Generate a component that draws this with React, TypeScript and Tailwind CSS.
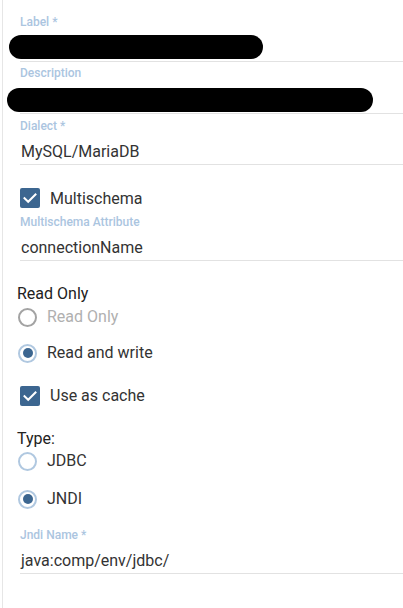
import React from "react";

const labelCls = "block h-[13px] text-[12px] leading-[13px] font-medium text-[#abc5df]";

function Check() {
  return (
    <div className="w-[20px] h-[20px] rounded-[2px] bg-[#3c6690] flex items-center justify-center shrink-0">
      <svg width="20" height="20" viewBox="0 0 20 20">
        <polyline points="4.5,10.2 8.2,13.8 15.5,6.5" fill="none" stroke="#ffffff" strokeWidth="2" strokeLinecap="square" />
      </svg>
    </div>
  );
}

function Radio({ checked, disabled }: { checked?: boolean; disabled?: boolean }) {
  return (
    <div
      className={
        "w-[19px] h-[19px] rounded-full border-2 flex items-center justify-center shrink-0 " +
        (disabled ? "border-[#a3a3a3]" : "border-[#b0c8e0]")
      }
    >
      {checked && <div className="w-[10px] h-[10px] rounded-full bg-[#3c6690]" />}
    </div>
  );
}

export default function App() {
  return (
    <div className="w-[403px] h-[608px] bg-white pl-[2px] overflow-hidden" style={{ fontFamily: "Roboto, 'Liberation Sans', sans-serif" }}>
      <div className="h-full border-l border-[#e6e6e6] pt-[16px] flex flex-col text-[#333333]">
        {/* Label */}
        <div className="pl-[17px]">
          <span className={labelCls}>Label *</span>
          <div className="pt-[6px] pb-[2px] border-b border-[#e2e2e2]">
            <div className="ml-[-11px] w-[254px] h-[24px] rounded-full bg-black" />
          </div>
        </div>
        {/* Description */}
        <div className="pl-[17px] mt-[5px]">
          <span className={labelCls}>Description</span>
          <div className="pt-[8px] pb-[1px] border-b border-[#e2e2e2]">
            <div className="ml-[-13px] w-[366px] h-[24px] rounded-full bg-black" />
          </div>
        </div>
        {/* Dialect */}
        <div className="pl-[17px] mt-[6px]">
          <span className={labelCls}>Dialect *</span>
          <div className="pt-[7px] pl-[1px] border-b border-[#e2e2e2] text-[16px] leading-6">MySQL/MariaDB</div>
        </div>
        {/* Multischema */}
        <div className="pl-[17px] mt-[21px] h-6 flex items-center gap-[10px]">
          <Check />
          <span className="text-[16px] leading-6 pt-[2px]">Multischema</span>
        </div>
        <div className="pl-[17px] mt-[6px]">
          <span className={labelCls}>Multischema Attribute</span>
          <div className="pt-[7px] pl-[1px] border-b border-[#e2e2e2] text-[16px] leading-6">connectionName</div>
        </div>
        {/* Read Only */}
        <div className="pl-[14px] mt-[21px] h-[23px] text-[16px] leading-[23px] text-[#222222]">Read Only</div>
        <div className="pl-[15px] h-6 flex items-center gap-[10px]">
          <Radio disabled />
          <span className="text-[16px] leading-6 text-[#b0b0b0]">Read Only</span>
        </div>
        <div className="pl-[15px] mt-[12px] h-6 flex items-center gap-[10px]">
          <Radio checked />
          <span className="text-[16px] leading-6">Read and write</span>
        </div>
        <div className="pl-[17px] mt-[19px] h-6 flex items-center gap-[10px]">
          <Check />
          <span className="text-[16px] leading-6">Use as cache</span>
        </div>
        {/* Type */}
        <div className="pl-[14px] mt-[19px] h-[23px] text-[16px] leading-[23px] text-[#222222]">Type:</div>
        <div className="pl-[15px] mt-[-1px] h-6 flex items-center gap-[10px]">
          <Radio />
          <span className="text-[16px] leading-6">JDBC</span>
        </div>
        <div className="pl-[15px] mt-[14px] h-6 flex items-center gap-[10px]">
          <Radio checked />
          <span className="text-[16px] leading-6">JNDI</span>
        </div>
        {/* Jndi Name */}
        <div className="pl-[17px] mt-[18px]">
          <span className={labelCls}>Jndi Name *</span>
          <div className="pt-[7px] pl-[1px] border-b border-[#e2e2e2] text-[16px] leading-6">java:comp/env/jdbc/</div>
        </div>
      </div>
    </div>
  );
}
